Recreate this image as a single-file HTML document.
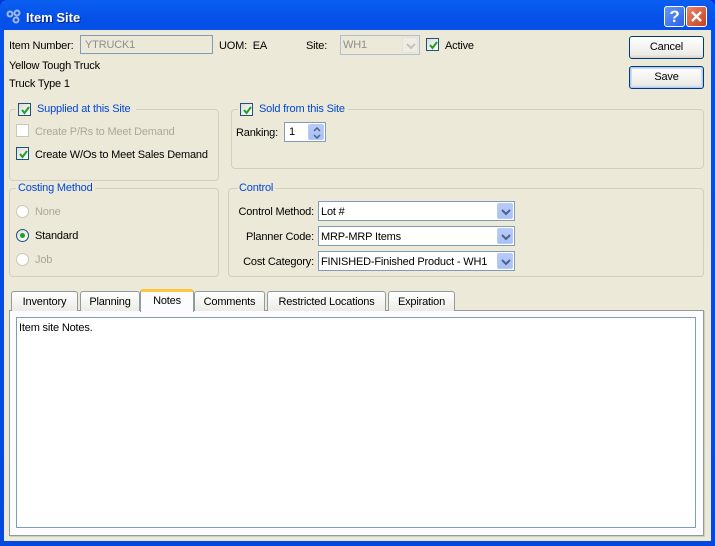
<!DOCTYPE html>
<html><head><meta charset="utf-8"><style>
*{box-sizing:border-box;margin:0;padding:0}
body{width:715px;height:546px;overflow:hidden;background:#0831D9;font-family:"Liberation Sans",sans-serif;font-size:11px;letter-spacing:-0.18px;color:#000;position:relative}
.a{position:absolute}
.t{position:absolute;white-space:nowrap;line-height:13px;margin-top:1px}
#frame{left:0;top:0;width:715px;height:546px;background:linear-gradient(#0A5FF0,#0550E8 20px,#0548E0);border-radius:7px 7px 0 0}
#client{left:4px;top:30px;width:707px;height:511px;background:#ECE9D8}
.in{position:absolute;background:#fff;border:1px solid #7F9DB9}
.cb{position:absolute;width:13px;height:13px;border:1px solid #1C5180;background:linear-gradient(135deg,#DCDCD7,#fff)}
.cb.dis{border-color:#CAC8BB;background:#fff}
.cb svg{position:absolute;left:2px;top:2px}
.grp{position:absolute;border:1px solid #D0D0BF;border-radius:4px}
.gt{position:absolute;background:#ECE9D8;color:#0046D5;padding:0 2px;line-height:13px;white-space:nowrap}
.btn{position:absolute;border:1px solid #003C74;border-radius:3px;background:linear-gradient(#fff,#ECEBE6 85%,#D6D0C5);text-align:center;line-height:21px}
.dd{position:absolute;right:1px;top:1px;width:16px;bottom:1px;background:linear-gradient(#B7CBF8,#A9C0F6);border-radius:2px;border:1px solid #B9CBF5}
.dd svg{position:absolute;left:3px;top:5px}
.rad{position:absolute;width:13px;height:13px;border-radius:50%;border:1px solid #1C5180;background:linear-gradient(135deg,#DCDCD7,#fff)}
.rad.dis{border-color:#CAC8BB;background:#fff}
.tab{position:absolute;top:291px;height:20px;border:1px solid #919B9C;border-bottom:none;border-radius:3px 3px 0 0;background:linear-gradient(#fff,#ECEBE5);text-align:center;line-height:20px}
</style></head><body>
<div id="frame" class="a"></div>
<svg class="a" style="left:6px;top:9px" width="16" height="16"><g fill="none" stroke="#9DB9EB" stroke-width="2"><circle cx="4" cy="5" r="2.5"/><circle cx="11" cy="4" r="2.5"/><circle cx="10" cy="11" r="2.5"/></g></svg>
<div class="t" style="left:26px;top:9px;font-size:13px;font-weight:bold;color:#fff;line-height:16px;text-shadow:1px 1px #0A1E80;letter-spacing:0">Item Site</div>
<div class="a" style="left:664px;top:6px;width:21px;height:21px;border:1px solid #fff;border-radius:3px;background:linear-gradient(135deg,#6A98F8,#2760E2);color:#fff;font-weight:bold;font-size:17px;text-align:center;line-height:19px">?</div>
<div class="a" style="left:686px;top:6px;width:21px;height:21px;border:1px solid #fff;border-radius:3px;background:linear-gradient(135deg,#E8876A,#C9401C)"><svg width="19" height="19"><path d="M5 5L14 14M14 5L5 14" stroke="#fff" stroke-width="2.4"/></svg></div>
<div id="client" class="a"></div>

<div class="t" style="left:9px;top:39px">Item Number:</div>
<div class="in" style="left:80px;top:35px;width:133px;height:19px;background:#ECE9D8;color:#8D8D8D;padding:3px 4px">YTRUCK1</div>
<div class="t" style="left:219px;top:39px">UOM:&nbsp; EA</div>
<div class="t" style="left:306px;top:39px">Site:</div>
<div class="in" style="left:340px;top:35px;width:80px;height:20px;background:#ECE9D8;color:#8D8D8D;padding:3px 2px;border-color:#AFBFD3">WH1<div class="dd" style="background:#EEEDE5;border-color:#E4E2D8"><svg width="10" height="8"><path d="M1 1L5 5L9 1" fill="none" stroke="#C4C2B8" stroke-width="2"/></svg></div></div>
<div class="cb" style="left:426px;top:38px"><svg width="9" height="9"><path d="M1 4L3.5 7L8 1" fill="none" stroke="#21A121" stroke-width="2"/></svg></div>
<div class="t" style="left:445px;top:39px">Active</div>
<div class="btn" style="left:629px;top:36px;width:75px;height:23px">Cancel</div>
<div class="btn" style="left:629px;top:66px;width:75px;height:23px;box-shadow:inset 0 0 0 1px #B3CBF5,inset 0 0 0 2px #CEDCF8">Save</div>
<div class="t" style="left:9px;top:59px">Yellow Tough Truck</div>
<div class="t" style="left:9px;top:77px">Truck Type 1</div>

<div class="grp" style="left:9px;top:109px;width:210px;height:72px"></div>
<div class="gt" style="left:16px;top:103px;width:120px;height:13px"></div>
<div class="cb" style="left:18px;top:103px"><svg width="9" height="9"><path d="M1 4L3.5 7L8 1" fill="none" stroke="#21A121" stroke-width="2"/></svg></div>
<div class="gt" style="left:35px;top:103px">Supplied at this Site</div>
<div class="cb dis" style="left:16px;top:124px"></div>
<div class="t" style="left:35px;top:125px;color:#ACA899">Create P/Rs to Meet Demand</div>
<div class="cb" style="left:16px;top:147px"><svg width="9" height="9"><path d="M1 4L3.5 7L8 1" fill="none" stroke="#21A121" stroke-width="2"/></svg></div>
<div class="t" style="left:35px;top:148px">Create W/Os to Meet Sales Demand</div>

<div class="grp" style="left:231px;top:109px;width:473px;height:60px"></div>
<div class="gt" style="left:238px;top:103px;width:110px;height:13px"></div>
<div class="cb" style="left:240px;top:103px"><svg width="9" height="9"><path d="M1 4L3.5 7L8 1" fill="none" stroke="#21A121" stroke-width="2"/></svg></div>
<div class="gt" style="left:257px;top:103px">Sold from this Site</div>
<div class="t" style="left:236px;top:126px">Ranking:</div>
<div class="in" style="left:284px;top:122px;width:42px;height:20px;padding:3px 4px">1<div class="dd" style="top:1px;bottom:1px"><svg width="10" height="14" style="top:1px"><path d="M2 5L5 2L8 5M2 9L5 12L8 9" fill="none" stroke="#4D6185" stroke-width="1.5"/></svg></div></div>

<div class="grp" style="left:9px;top:188px;width:210px;height:89px"></div>
<div class="gt" style="left:16px;top:182px">Costing Method</div>
<div class="rad dis" style="left:16px;top:205px"></div><div class="t" style="left:35px;top:205px;color:#ACA899">None</div>
<div class="rad" style="left:16px;top:229px"><div class="a" style="left:3px;top:3px;width:5px;height:5px;border-radius:50%;background:#21A121"></div></div><div class="t" style="left:35px;top:229px">Standard</div>
<div class="rad dis" style="left:16px;top:253px"></div><div class="t" style="left:35px;top:253px;color:#ACA899">Job</div>

<div class="grp" style="left:228px;top:188px;width:476px;height:89px"></div>
<div class="gt" style="left:237px;top:182px">Control</div>
<div class="t" style="left:200px;width:114px;text-align:right;top:205px">Control Method:</div>
<div class="t" style="left:200px;width:114px;text-align:right;top:230px">Planner Code:</div>
<div class="t" style="left:200px;width:114px;text-align:right;top:255px">Cost Category:</div>
<div class="in" style="left:318px;top:201px;width:197px;height:20px;padding:4px 2px 0">Lot #<div class="dd"><svg width="10" height="8"><path d="M1 1L5 5L9 1" fill="none" stroke="#4D6185" stroke-width="2"/></svg></div></div>
<div class="in" style="left:318px;top:226px;width:197px;height:20px;padding:4px 2px 0">MRP-MRP Items<div class="dd"><svg width="10" height="8"><path d="M1 1L5 5L9 1" fill="none" stroke="#4D6185" stroke-width="2"/></svg></div></div>
<div class="in" style="left:318px;top:251px;width:197px;height:20px;padding:4px 2px 0">FINISHED-Finished Product - WH1<div class="dd"><svg width="10" height="8"><path d="M1 1L5 5L9 1" fill="none" stroke="#4D6185" stroke-width="2"/></svg></div></div>

<div class="a" style="left:9px;top:310px;width:695px;height:226px;border:1px solid #919B9C;background:#FCFCFE;box-shadow:1px 1px 0 #D0CEBF"></div>
<div class="tab" style="left:11px;width:67px">Inventory</div>
<div class="tab" style="left:80px;width:60px">Planning</div>
<div class="tab" style="left:194px;width:71px">Comments</div>
<div class="tab" style="left:267px;width:119px">Restricted Locations</div>
<div class="tab" style="left:388px;width:67px">Expiration</div>
<div class="tab" style="left:140px;width:54px;top:289px;height:23px;background:#FCFCFE;border-top:3px solid #FFC83C;line-height:19px">Notes</div>
<div class="a" style="left:16px;top:317px;width:680px;height:211px;border:1px solid #7F9DB9;background:#fff"></div>
<div class="t" style="left:19px;top:321px">Item site Notes.</div>
</body></html>
